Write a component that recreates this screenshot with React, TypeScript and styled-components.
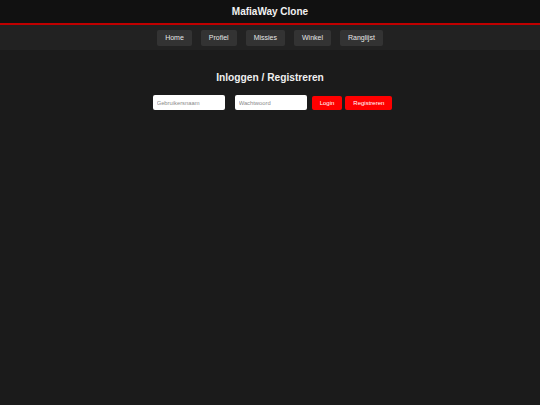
import styled, { createGlobalStyle } from "styled-components";

const GlobalStyle = createGlobalStyle`
  html, body {
    margin: 0;
    padding: 0;
    background-color: #1b1b1b;
    font-family: "Liberation Sans", Arial, sans-serif;
    color: white;
  }
`;

const navItems = ["Home", "Profiel", "Missies", "Winkel", "Ranglijst"];

function App() {
  return (
    <>
      <GlobalStyle />
      <Page>
        <Header>
          <Logo>MafiaWay Clone</Logo>
        </Header>
        <Nav>
          {navItems.map((item) => (
            <NavButton key={item}>{item}</NavButton>
          ))}
        </Nav>
        <Main>
          <Heading>Inloggen / Registreren</Heading>
          <Form>
            <Input type="text" placeholder="Gebruikersnaam" />
            <Input type="password" placeholder="Wachtwoord" />
            <Button>Login</Button>
            <Button>Registreren</Button>
          </Form>
        </Main>
      </Page>
    </>
  );
}

export default App;

const Page = styled.div`
  min-height: 405px;
  background-color: #1b1b1b;
`;

const Header = styled.header`
  display: flex;
  justify-content: center;
  align-items: center;
  height: 23px;
  background-color: #111111;
  border-bottom: 2px solid #c00000;
`;

const Logo = styled.h1`
  margin: 0;
  font-size: 10px;
  font-weight: bold;
  color: #f2f2f2;
`;

const Nav = styled.nav`
  display: flex;
  justify-content: center;
  align-items: center;
  gap: 9px;
  height: 25px;
  background-color: #222222;
`;

const NavButton = styled.a`
  display: flex;
  align-items: center;
  height: 16px;
  padding: 0 8px;
  border-radius: 2px;
  background-color: #333333;
  color: #e6e6e6;
  font-size: 7px;
  cursor: pointer;
`;

const Main = styled.main`
  display: flex;
  flex-direction: column;
  align-items: center;
  padding-top: 22px;
`;

const Heading = styled.h2`
  margin: 0;
  font-size: 10.2px;
  font-weight: bold;
  color: #f0f0f0;
`;

const Form = styled.div`
  display: flex;
  align-items: center;
  margin-top: 12px;
`;

const Input = styled.input`
  box-sizing: border-box;
  width: 72px;
  height: 15px;
  margin: 0 5px;
  padding: 0 4px;
  border: none;
  border-radius: 2px;
  background-color: #ffffff;
  font-family: "Liberation Sans", Arial, sans-serif;
  font-size: 5.8px;
  outline: none;
  &::placeholder {
    color: #8a8a8a;
  }
`;

const Button = styled.button`
  box-sizing: border-box;
  height: 14px;
  padding: 0 8px;
  border: none;
  border-radius: 2px;
  background-color: #ff0000;
  color: #ffffff;
  font-family: "Liberation Sans", Arial, sans-serif;
  font-size: 6px;
  cursor: pointer;
  & + & {
    margin-left: 3px;
  }
`;
